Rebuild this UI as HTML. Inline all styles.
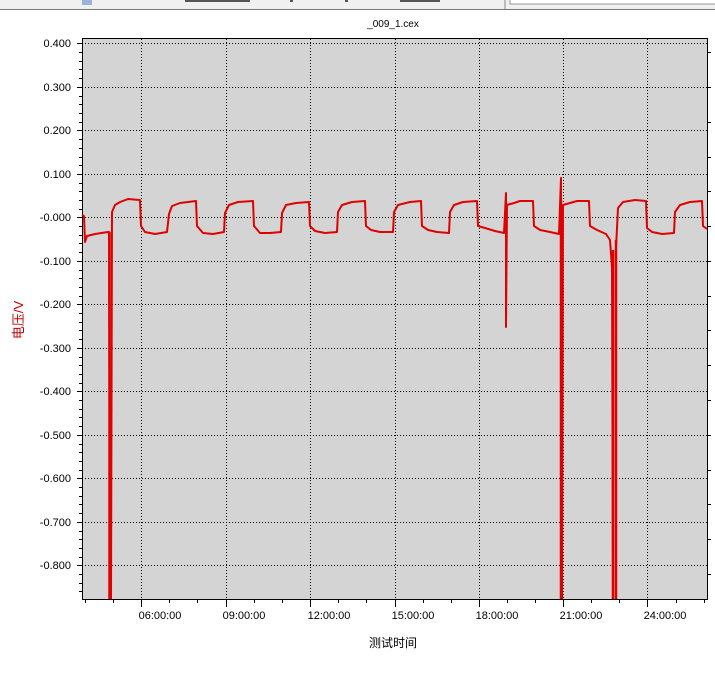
<!DOCTYPE html>
<html><head><meta charset="utf-8"><style>
html,body{margin:0;padding:0;background:#fff;width:715px;height:681px;overflow:hidden}
svg text{font-family:"Liberation Sans","Noto Sans CJK SC",sans-serif}
</style></head><body>
<svg width="715" height="681" viewBox="0 0 715 681" xmlns="http://www.w3.org/2000/svg">
<rect x="0" y="0" width="715" height="9" fill="#f0f0f0"/>
<rect x="82" y="0" width="10" height="5" fill="#9ab4d8"/>
<rect x="185" y="0" width="65" height="2" fill="#555"/>
<rect x="290" y="0" width="3" height="2" fill="#555"/>
<rect x="345" y="0" width="3" height="2" fill="#555"/>
<rect x="400" y="0" width="40" height="2" fill="#555"/>
<line x1="505" y1="0" x2="505" y2="9" stroke="#888"/>
<rect x="510" y="-1" width="206" height="5" fill="#fff" stroke="#999"/>
<line x1="0" y1="9.5" x2="715" y2="9.5" stroke="#777"/>
<text x="393" y="27" font-size="10" text-anchor="middle" fill="#000">_009_1.cex</text>
<rect x="82" y="39" width="625" height="560" fill="#d4d4d4"/>
<g stroke="#000" stroke-width="1" stroke-dasharray="1,2">
<line x1="82" y1="43.5" x2="707" y2="43.5"/><line x1="82" y1="87.5" x2="707" y2="87.5"/>
<line x1="82" y1="130.5" x2="707" y2="130.5"/><line x1="82" y1="174.5" x2="707" y2="174.5"/>
<line x1="82" y1="217.5" x2="707" y2="217.5"/><line x1="82" y1="261.5" x2="707" y2="261.5"/>
<line x1="82" y1="304.5" x2="707" y2="304.5"/><line x1="82" y1="348.5" x2="707" y2="348.5"/>
<line x1="82" y1="391.5" x2="707" y2="391.5"/><line x1="82" y1="435.5" x2="707" y2="435.5"/>
<line x1="82" y1="478.5" x2="707" y2="478.5"/><line x1="82" y1="522.5" x2="707" y2="522.5"/>
<line x1="82" y1="565.5" x2="707" y2="565.5"/>
<line x1="141.5" y1="39" x2="141.5" y2="599"/><line x1="226.5" y1="39" x2="226.5" y2="599"/>
<line x1="310.5" y1="39" x2="310.5" y2="599"/><line x1="395.5" y1="39" x2="395.5" y2="599"/>
<line x1="479.5" y1="39" x2="479.5" y2="599"/><line x1="563.5" y1="39" x2="563.5" y2="599"/>
<line x1="647.5" y1="39" x2="647.5" y2="599"/>
</g>
<g stroke="#000" fill="none">
<line x1="82.5" y1="39" x2="82.5" y2="600"/>
<line x1="82" y1="599.5" x2="708" y2="599.5"/>
<line x1="82" y1="38.5" x2="708" y2="38.5"/>
<line x1="707.5" y1="39" x2="707.5" y2="600"/>
</g>
<g stroke="#000">
<path d="M77 43.5h5M77 87.5h5M77 130.5h5M77 174.5h5M77 217.5h5M77 261.5h5M77 304.5h5M77 348.5h5M77 391.5h5M77 435.5h5M77 478.5h5M77 522.5h5M77 565.5h5"/>
<path d="M79 52.5h3M79 61.5h3M79 69.5h3M79 78.5h3M79 96.5h3M79 104.5h3M79 113.5h3M79 122.5h3M79 139.5h3M79 148.5h3M79 157.5h3M79 165.5h3M79 183.5h3M79 191.5h3M79 200.5h3M79 209.5h3M79 226.5h3M79 235.5h3M79 243.5h3M79 252.5h3M79 270.5h3M79 278.5h3M79 287.5h3M79 296.5h3M79 313.5h3M79 322.5h3M79 330.5h3M79 339.5h3M79 357.5h3M79 365.5h3M79 374.5h3M79 383.5h3M79 400.5h3M79 409.5h3M79 417.5h3M79 426.5h3M79 444.5h3M79 452.5h3M79 461.5h3M79 470.5h3M79 487.5h3M79 496.5h3M79 504.5h3M79 513.5h3M79 531.5h3M79 539.5h3M79 548.5h3M79 557.5h3M79 574.5h3M79 583.5h3M79 591.5h3"/>
<path d="M141.5 599v8M226.5 599v8M310.5 599v8M395.5 599v8M479.5 599v8M563.5 599v8M647.5 599v8"/>
<path d="M85.5 599v4M113.5 599v4M169.5 599v4M197.5 599v4M254.5 599v4M282.5 599v4M338.5 599v4M366.5 599v4M423.5 599v4M451.5 599v4M507.5 599v4M535.5 599v4M591.5 599v4M619.5 599v4M676.5 599v4M704.5 599v4"/>
<path d="M707 52.5h4M707 87.5h4M707 122.5h4M707 157.5h4M707 191.5h4M707 226.5h4M707 261.5h4M707 296.5h4M707 330.5h4M707 365.5h4M707 400.5h4M707 435.5h4M707 470.5h4M707 504.5h4M707 539.5h4M707 574.5h4"/>
</g>
<g font-size="11" fill="#000" text-anchor="end">
<text x="71" y="47">0.400</text><text x="71" y="91">0.300</text><text x="71" y="134">0.200</text>
<text x="71" y="178">0.100</text><text x="71" y="221">-0.000</text><text x="71" y="265">-0.100</text>
<text x="71" y="308">-0.200</text><text x="71" y="352">-0.300</text><text x="71" y="395">-0.400</text>
<text x="71" y="439">-0.500</text><text x="71" y="482">-0.600</text><text x="71" y="526">-0.700</text>
<text x="71" y="569">-0.800</text>
</g>
<g font-size="11" fill="#000" text-anchor="middle">
<text x="160" y="619">06:00:00</text><text x="244" y="619">09:00:00</text><text x="329" y="619">12:00:00</text>
<text x="413" y="619">15:00:00</text><text x="497" y="619">18:00:00</text><text x="581" y="619">21:00:00</text>
<text x="665" y="619">24:00:00</text>
</g>
<text x="393" y="647" font-size="12" text-anchor="middle" fill="#000">测试时间</text>
<text transform="translate(23,320) rotate(-90)" font-size="13" text-anchor="middle" fill="#c00000">电压/V</text>
<g fill="none" stroke="#e00000" stroke-width="2" stroke-linejoin="round">
<path d="M82 215L84 216L85 242L87 236L95 234L108 232L109 232L110 599M111 599L112 212L115 205L120 202L128 199L140 200L141 226L145 232L155 234L167 232L169 214L172 206L180 203L196 201L197 226L203 233L213 234L224 232L225 213L229 205L238 202L253 201L254 226L260 233L270 233L281 232L282 213L286 205L296 203L309 202L310 226L315 231L325 233L337 232L338 212L342 205L352 202L365 201L366 226L371 230L380 232L393 232L394 212L398 205L410 202L421 201L422 226L428 230L437 232L449 233L450 212L454 205L463 202L477 201L478 226L485 228L495 231L504 233L506 193L506 327L507 205L514 203L520 201L533 201L534 226L540 230L550 232L559 234L561 178L561 599M562 599L563 205L570 203L577 201L589 201L590 226L597 230L606 234L610 240L612 268L613 599M616 599L616 248L618 208L623 202L635 200L646 201L647 228L652 232L662 234L674 233L675 212L680 205L690 202L702 201L703 226L707 229"/>
<path d="M109.5 232V599M561 200V599M613 250V599M616 240V599" stroke-width="2.5"/>
</g>
</svg>
</body></html>
